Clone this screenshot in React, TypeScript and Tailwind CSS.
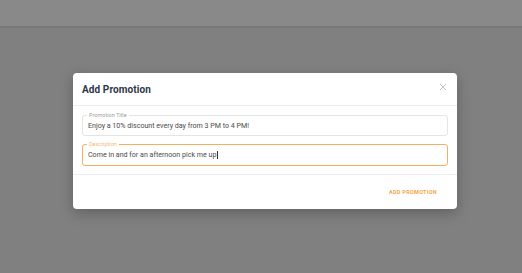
export default function App() {
  return (
    <div className="h-[273px] w-full flex flex-col bg-[#808080] font-['Roboto',sans-serif] overflow-hidden">
      <div className="h-[28px] bg-[#898989] border-b-2 border-[#787878] shrink-0" />
      <div className="flex justify-start pl-[73px] pt-[45px]">
        <div className="w-[384px] h-[136px] bg-white rounded-[4px] shadow-[0_4px_14px_rgba(0,0,0,0.25)] flex flex-col">
          {/* header */}
          <div className="h-[33px] flex items-center justify-between pl-[9px] pr-[10px] border-b border-[#ececec]">
            <h2 className="text-[10px] font-bold text-[#2d3748] tracking-[0.1px]">Add Promotion</h2>
            <svg width="8" height="8" viewBox="0 0 8 8" className="mt-[-4px]">
              <path d="M1 1L7 7M7 1L1 7" stroke="#c4c4c4" strokeWidth="1" />
            </svg>
          </div>

          {/* body */}
          <div className="flex flex-col gap-[8px] px-[9px] pt-[9px] pb-[8px] border-b border-[#ececec]">
            <div className="relative h-[21px] border border-[#e4e4e4] rounded-[3px] flex items-center px-[5px]">
              <span className="absolute left-[4px] top-[-5px] bg-white px-[2px] text-[5.5px] leading-[8px] text-[#a0a0a0]">
                Promotion Title
              </span>
              <span className="text-[7.1px] text-[#4a4a4a] pt-[1px]">
                Enjoy a 10% discount every day from 3 PM to 4 PM!
              </span>
            </div>
            <div className="relative h-[22px] border border-[#f6ae62] rounded-[3px] flex items-center px-[5px]">
              <span className="absolute left-[4px] top-[-5px] bg-white px-[2px] text-[5.5px] leading-[8px] text-[#f6b878]">
                Description
              </span>
              <span className="text-[7.1px] text-[#4a4a4a] pt-[1px] flex items-center">
                Come in and for an afternoon pick me up
                <span className="inline-block w-px h-[8px] bg-[#333] ml-px" />
              </span>
            </div>
          </div>

          {/* footer */}
          <div className="flex-1 flex items-center justify-end pr-[20px]">
            <button className="text-[5.5px] font-bold tracking-[0.3px] text-[#f6a54f] uppercase">
              Add Promotion
            </button>
          </div>
        </div>
      </div>
    </div>
  );
}
